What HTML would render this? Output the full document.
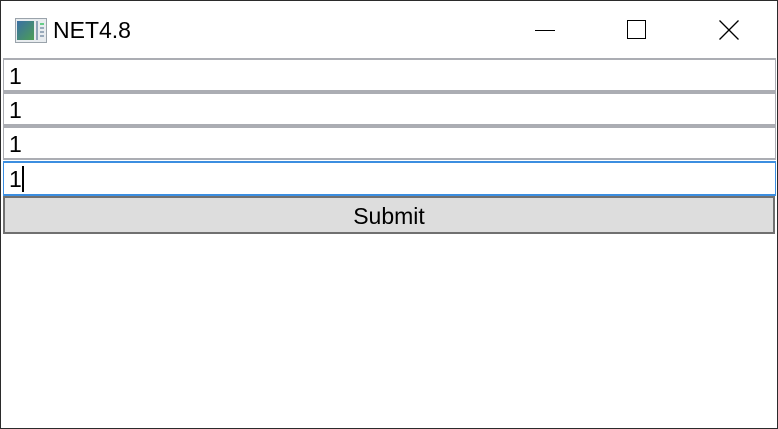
<!DOCTYPE html>
<html><head><style>
body{margin:0;width:778px;height:429px;overflow:hidden;background:#fff;font-family:"Liberation Sans",sans-serif;}
.win{position:absolute;left:0;top:0;width:776px;height:427px;border:1px solid #2b2b2b;background:#fff;}
.t{position:absolute;left:52px;top:16px;font-size:23px;color:#000;}
.box{position:absolute;left:2px;width:766px;height:30px;border:1px solid #abadb3;border-top-width:2px;border-bottom-width:2px;font-size:23px;line-height:32px;padding-left:5px;box-sizing:content-box;}
.btn{position:absolute;left:2px;top:195px;width:768px;height:34px;border:2px solid #707070;background:#dddddd;font-size:23px;line-height:36px;text-align:center;}
</style></head><body>
<div class="win">
<svg style="position:absolute;left:14px;top:17px" width="32" height="25" viewBox="0 0 32 25">
<rect x="0.5" y="0.5" width="31" height="24" fill="#e8ecef" stroke="#9aa3ab"/>
<defs><linearGradient id="g" x1="0" y1="0" x2="1" y2="1"><stop offset="0" stop-color="#3a6fa5"/><stop offset="1" stop-color="#4c9e55"/></linearGradient></defs>
<rect x="2" y="3" width="17" height="19" fill="url(#g)"/>
<rect x="21" y="3" width="2" height="19" fill="#8fa4b8"/>
<rect x="25" y="5" width="4" height="2" fill="#6c8"/><rect x="25" y="9" width="4" height="2" fill="#9ab"/><rect x="25" y="13" width="4" height="2" fill="#9ab"/><rect x="25" y="17" width="4" height="2" fill="#9ab"/>
</svg>
<div class="t">NET4.8</div>
<div style="position:absolute;left:534px;top:29px;width:20px;height:1px;background:#000"></div>
<div style="position:absolute;left:626px;top:19px;width:17px;height:17px;border:1px solid #000"></div>
<svg style="position:absolute;left:718px;top:19px" width="20" height="20"><path d="M0.5 0.5L19.5 19.5M19.5 0.5L0.5 19.5" stroke="#000" stroke-width="1.3"/></svg>
<div class="box" style="top:57px">1</div>
<div class="box" style="top:91px">1</div>
<div class="box" style="top:125px">1</div>
<div class="box" style="top:160px;border-color:#3c8ee0;height:31px;line-height:33px">1<span style="display:inline-block;width:2px;height:26px;background:#000;vertical-align:middle;margin-top:-3px"></span></div>
<div class="btn">Submit</div>
</div>
</body></html>
